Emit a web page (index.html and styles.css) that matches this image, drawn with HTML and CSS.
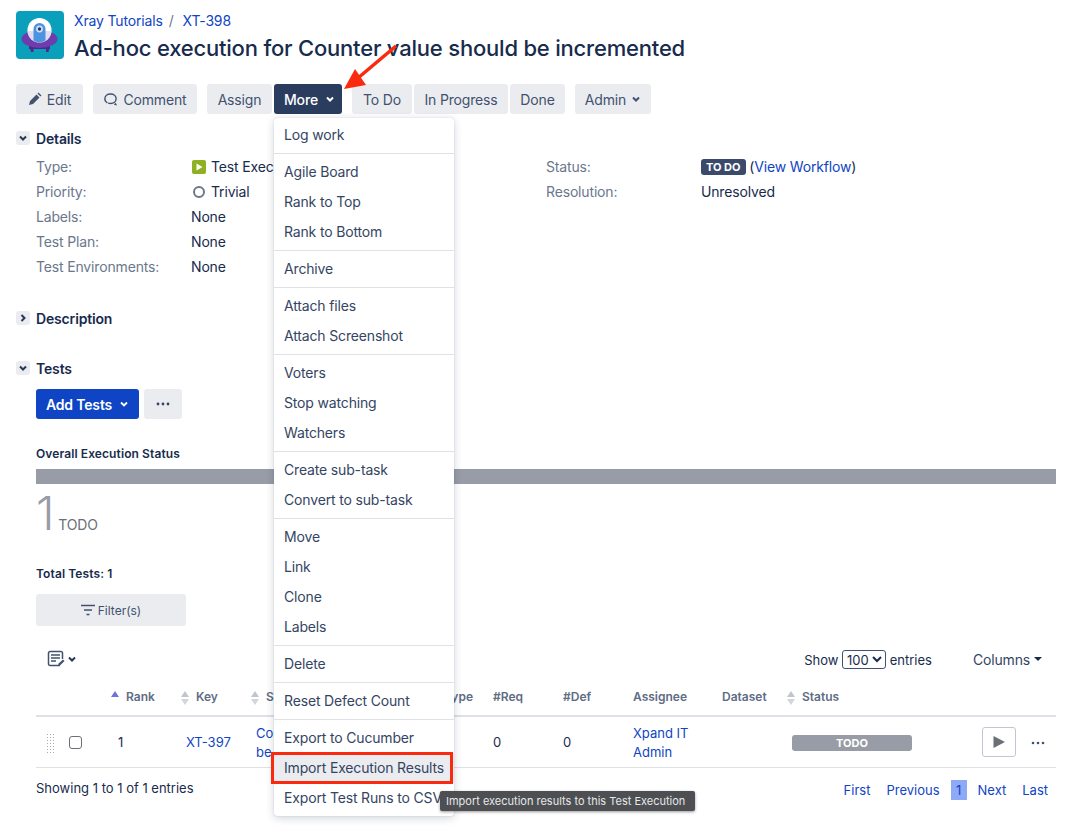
FILE: index.html
```html
<!DOCTYPE html>
<html lang="en">
<head>
<meta charset="utf-8">
<title>XT-398</title>
<link rel="stylesheet" href="styles.css">
</head>
<body>
<div class="page">
  <header class="issue-head">
    <svg class="avatar" viewBox="0 0 48 48" width="48" height="48">
      <rect width="48" height="48" rx="4" fill="#0a9fbb"/>
      <path d="M14 36h3.500v5H15zM30 36h3.500L32.500 41H30z" fill="#4a2a8c"/>
      <rect x="13" y="35" width="21" height="3" fill="#4a2a8c"/>
      <ellipse cx="23.500" cy="28" rx="18" ry="9" fill="#6d3cad"/>
      <circle cx="23.500" cy="19" r="12" fill="#fff"/>
      <path d="M11.500 20a12 11.500 0 0 0 24 0z" fill="#e3dcf5"/>
      <path d="M17.500 29V18a6 6 0 0 1 12 0v11a6 2 0 0 1-12 0z" fill="#4c93e0"/>
      <circle cx="23.500" cy="18" r="3.400" fill="#cfe2f7"/>
      <circle cx="23.500" cy="18" r="1.700" fill="#27306e"/>
    </svg>
    <div class="head-text">
      <nav class="crumbs"><a class="link" href="#">Xray Tutorials</a><span class="sep">/</span><a class="link" href="#">XT-398</a></nav>
      <h1 class="title">Ad-hoc execution for Counter value should be incremented</h1>
    </div>
  </header>

  <div class="toolbar">
    <button class="btn btn-edit"><svg viewBox="0 0 14 14" width="14" height="14"><path d="M1 13l1-4 6.500-6.500 3 3L5 12zM9.500 1.500l1-1 3 3-1 1z" fill="#42526e"/></svg>Edit</button>
    <button class="btn btn-comment"><svg viewBox="0 0 16 16" width="15" height="15"><path d="M8 2.200c3.400 0 6 2 6 5.100 0 2.900-2.600 5-6 5-1 0-1.700-.1-2.500-.4M8 2.200c-3.400 0-6 2-6 5.100 0 2 1.100 3.500 2.700 4.300" fill="none" stroke="#42526e" stroke-width="1.500"/><path d="M15 14.500l-3.500-1 2-2z" fill="#42526e"/></svg>Comment</button>
    <button class="btn btn-assign">Assign</button>
    <button class="btn btn-more">More<svg class="chev" viewBox="0 0 10 10" width="10" height="10"><path d="M2 3.500l3 3 3-3" fill="none" stroke="#fff" stroke-width="2"/></svg></button>
    <button class="btn btn-todo">To Do</button>
    <button class="btn btn-prog">In Progress</button>
    <button class="btn btn-done">Done</button>
    <button class="btn btn-admin">Admin<svg class="chev" viewBox="0 0 10 10" width="10" height="10"><path d="M2 3.500l3 3 3-3" fill="none" stroke="#42526e" stroke-width="2"/></svg></button>
  </div>

  <section class="module details-mod">
    <h2 class="mod-head"><span class="toggler"><svg viewBox="0 0 10 10" width="10" height="10"><path d="M2 3.500l3 3 3-3" fill="none" stroke="#253858" stroke-width="2"/></svg></span>Details</h2>
    <div class="details">
      <dl class="fields">
        <dt>Type:</dt><dd><span class="type-icon"><svg viewBox="0 0 14 14" width="14" height="14"><rect width="14" height="14" rx="2" fill="#8eb021"/><path d="M4.500 3.500l6 3.500-6 3.500z" fill="#fff"/></svg></span>Test Execution</dd>
        <dt>Priority:</dt><dd><span class="type-icon"><svg viewBox="0 0 14 14" width="14" height="14"><circle cx="7" cy="7" r="5" fill="none" stroke="#6b778c" stroke-width="2"/></svg></span>Trivial</dd>
        <dt>Labels:</dt><dd>None</dd>
        <dt>Test Plan:</dt><dd>None</dd>
        <dt>Test Environments:</dt><dd>None</dd>
      </dl>
      <dl class="fields">
        <dt>Status:</dt><dd><span class="lozenge">TO DO</span> (<a class="link" href="#">View Workflow</a>)</dd>
        <dt>Resolution:</dt><dd>Unresolved</dd>
      </dl>
    </div>
  </section>

  <section class="module desc-mod">
    <h2 class="mod-head"><span class="toggler"><svg viewBox="0 0 10 10" width="10" height="10"><path d="M3.500 2l3 3-3 3" fill="none" stroke="#253858" stroke-width="2"/></svg></span>Description</h2>
  </section>

  <section class="module tests-mod">
    <h2 class="mod-head"><span class="toggler"><svg viewBox="0 0 10 10" width="10" height="10"><path d="M2 3.500l3 3 3-3" fill="none" stroke="#253858" stroke-width="2"/></svg></span>Tests</h2>
    <div class="tests-body">
      <div class="tests-actions">
        <button class="btn btn-add">Add Tests<svg class="chev" viewBox="0 0 10 10" width="10" height="10"><path d="M2 3.500l3 3 3-3" fill="none" stroke="#fff" stroke-width="1.800"/></svg></button>
        <button class="btn btn-dots"><svg viewBox="0 0 14 4" width="14" height="4"><circle cx="2" cy="2" r="1.400" fill="#344563"/><circle cx="7" cy="2" r="1.400" fill="#344563"/><circle cx="12" cy="2" r="1.400" fill="#344563"/></svg></button>
      </div>
      <h3 class="small-head overall">Overall Execution Status</h3>
      <div class="progress"></div>
      <div class="count"><span class="count-num">1</span><span class="count-label">TODO</span></div>
      <h3 class="small-head total">Total Tests: 1</h3>
      <button class="btn btn-filter"><svg viewBox="0 0 14 12" width="14" height="12"><path d="M0 1.500h14M3 6h8M5.500 10.500h3" stroke="#42526e" stroke-width="1.400" fill="none"/></svg>Filter(s)</button>
      <div class="table-ctrl">
        <div class="export">
          <svg viewBox="0 0 18 18" width="18" height="18"><path d="M13 15.500H3a1.500 1.500 0 0 1-1.500-1.500V3A1.500 1.500 0 0 1 3 1.500h11A1.500 1.500 0 0 1 15.500 3v6" fill="none" stroke="#42526e" stroke-width="1.500"/><path d="M4 5h9M4 8h9M4 11h5" stroke="#42526e" stroke-width="1.300"/><path d="M11 16l.6-2.500 4.400-4 1.500 1.500-4.300 4.300z" fill="#42526e"/></svg>
          <svg viewBox="0 0 10 10" width="10" height="10"><path d="M2 3.500l3 3 3-3" fill="none" stroke="#253858" stroke-width="2"/></svg>
        </div>
        <div class="len">Show <select class="len-select"><option>100</option></select> entries</div>
        <div class="columns">Columns<span class="caret"></span></div>
      </div>
      <table class="grid">
        <colgroup><col class="c-grip"><col class="c-check"><col class="c-rank"><col class="c-key"><col class="c-sum"><col class="c-type"><col class="c-req"><col class="c-def"><col class="c-asg"><col class="c-data"><col class="c-stat"><col class="c-act"></colgroup>
        <thead>
          <tr>
            <th></th><th></th>
            <th class="sorted"><span class="sort up"></span>Rank</th>
            <th class="sortable"><span class="sort"></span>Key</th>
            <th class="sortable"><span class="sort"></span>Summary</th>
            <th class="type-h">Test Type</th>
            <th>#Req</th><th>#Def</th><th>Assignee</th><th>Dataset</th>
            <th class="sortable"><span class="sort"></span>Status</th>
            <th></th>
          </tr>
        </thead>
        <tbody>
          <tr>
            <td><span class="grip"></span></td>
            <td><span class="check"></span></td>
            <td class="rank">1</td>
            <td><a class="link" href="#">XT-397</a></td>
            <td><a class="link" href="#">Counter value should be incremented</a></td>
            <td></td>
            <td>0</td><td>0</td>
            <td><a class="link" href="#">Xpand IT Admin</a></td>
            <td></td>
            <td><span class="status-pill">TODO</span></td>
            <td class="actions"><button class="play"><svg viewBox="0 0 14 14" width="14" height="14"><path d="M1.500 1l11.500 6-11.500 6z" fill="#6b6f76"/></svg></button><svg viewBox="0 0 14 4" width="14" height="4"><circle cx="2" cy="2" r="1.300" fill="#42526e"/><circle cx="7" cy="2" r="1.300" fill="#42526e"/><circle cx="12" cy="2" r="1.300" fill="#42526e"/></svg></td>
          </tr>
        </tbody>
      </table>
      <div class="table-foot">
        <div class="showing">Showing 1 to 1 of 1 entries</div>
        <div class="pager"><a class="link" href="#">First</a><a class="link" href="#">Previous</a><a class="link current" href="#">1</a><a class="link" href="#">Next</a><a class="link" href="#">Last</a></div>
      </div>
    </div>
  </section>

  <div class="menu">
    <ul class="menu-sec first"><li>Log work</li></ul>
    <ul class="menu-sec"><li>Agile Board</li><li>Rank to Top</li><li>Rank to Bottom</li></ul>
    <ul class="menu-sec"><li>Archive</li></ul>
    <ul class="menu-sec"><li>Attach files</li><li>Attach Screenshot</li></ul>
    <ul class="menu-sec"><li>Voters</li><li>Stop watching</li><li>Watchers</li></ul>
    <ul class="menu-sec"><li>Create sub-task</li><li>Convert to sub-task</li></ul>
    <ul class="menu-sec"><li>Move</li><li>Link</li><li>Clone</li><li>Labels</li></ul>
    <ul class="menu-sec"><li>Delete</li></ul>
    <ul class="menu-sec"><li>Reset Defect Count</li></ul>
    <ul class="menu-sec"><li>Export to Cucumber</li><li class="active">Import Execution Results</li><li>Export Test Runs to CSV</li></ul>
  </div>
  <div class="red-box"></div>
  <div class="tooltip">Import execution results to this Test Execution</div>
  <svg class="arrow" viewBox="0 0 60 52" width="60" height="52"><path d="M54 3L16 35" stroke="#fa2a0f" stroke-width="3.500" fill="none"/><path d="M2 46L13 26 24 42z" fill="#fa2a0f"/></svg>
</div>
</body>
</html>
```
FILE: styles.css
```css
* { box-sizing: border-box; }
html, body { margin: 0; padding: 0; background: #fff; }
body { font-family: Inter, "Liberation Sans", sans-serif; font-size: 14px; letter-spacing: -.16px; color: #172b4d; overflow: hidden; }
.page { position: relative; width: 1075px; height: 828px; padding: 11px 19px 0 16px; overflow: hidden; }
.link { color: #0f45c4; text-decoration: none; }

.issue-head { display: flex; gap: 10px; height: 51px; }
.avatar { flex: none; }
.crumbs { height: 20px; line-height: 20px; }
.sep { color: #6b778c; margin: 0 9px 0 6px; }
.title { margin: 3px 0 0; font-size: 22px; line-height: 28px; font-weight: 500; color: #172b4d; white-space: nowrap; letter-spacing: -.2px; }

.toolbar { display: flex; margin-top: 22px; }
.btn { display: inline-flex; align-items: center; justify-content: center; height: 30px; border: 0; border-radius: 3px; background: #ebecf0; color: #42526e; font: inherit; letter-spacing: inherit; padding: 0; }
.btn-edit { width: 67px; gap: 5px; }
.btn-comment { width: 104px; margin-left: 10px; gap: 5px; }
.btn-assign { width: 65px; margin-left: 10px; }
.btn-more { width: 68px; margin-left: 2px; background: #2b3d5f; color: #fff; font-weight: 500; gap: 7px; justify-content: flex-start; padding-left: 10px; }
.btn-todo { width: 60px; margin-left: 10px; }
.btn-prog { width: 94px; margin-left: 2px; }
.btn-done { width: 55px; margin-left: 2px; }
.btn-admin { width: 76px; margin-left: 10px; gap: 5px; }

.module { display: block; }
.mod-head { display: flex; align-items: center; gap: 6px; height: 20px; margin: 0; font-size: 14px; font-weight: 600; color: #172b4d; }
.toggler { display: flex; align-items: center; justify-content: center; width: 14px; height: 14px; border-radius: 3px; background: #ebecf0; }
.details-mod { margin-top: 14px; }
.desc-mod { margin-top: 29px; }
.tests-mod { margin-top: 30px; }

.details { display: flex; margin: 6px 0 0 20px; }
.fields { display: grid; grid-template-columns: 155px 1fr; grid-auto-rows: 25px; align-items: center; margin: 0; width: 510px; }
.fields dt { color: #6b778c; }
.fields dd { margin: 0; color: #172b4d; white-space: nowrap; }
.type-icon { display: inline-flex; vertical-align: -2px; margin: 0 5px 0 1px; }
.lozenge { display: inline-block; height: 16px; line-height: 16px; padding: 0 5px; border-radius: 3px; background: #3b4a6b; color: #fff; font-size: 11px; font-weight: 700; letter-spacing: 0; vertical-align: 1px; }

.tests-body { margin-left: 20px; }
.tests-actions { display: flex; gap: 5px; margin-top: 11px; }
.btn-add { width: 103px; background: #0f45c4; color: #fff; font-weight: 600; gap: 7px; }
.btn-dots { width: 38px; }
.small-head { margin: 0; font-size: 12px; line-height: 16px; font-weight: 600; letter-spacing: .1px; color: #172b4d; }
.overall { margin-top: 27px; }
.progress { height: 15px; margin-top: 7px; background: #989ca6; }
.count { display: flex; align-items: baseline; gap: 4px; height: 50px; margin-top: 4px; }
.count-num { font-size: 47px; line-height: 50px; font-weight: 300; color: #989ca6; }
.count-label { font-size: 14px; color: #6b6f76; }
.total { margin-top: 28px; }
.btn-filter { width: 150px; height: 32px; margin-top: 12px; font-size: 12px; letter-spacing: 0; gap: 3px; background: #ebecf0; display: flex; }
.table-ctrl { display: flex; align-items: center; height: 30px; margin-top: 18px; }
.export { display: flex; align-items: center; gap: 2px; margin-left: 11px; }
.len { margin-left: auto; font-size: 13px; letter-spacing: 0; color: #172b4d; }
.len-select { font: inherit; width: 44px; height: 19px; padding: 0; color: #172b4d; background: #fff; border: 1px solid #42526e; border-radius: 3px; }
.columns { display: flex; align-items: center; gap: 4px; margin: 0 14px 0 41px; color: #344563; }
.caret { width: 0; height: 0; border: 4px solid transparent; border-top-color: #172b4d; border-bottom: 0; }

.grid { width: 1020px; table-layout: fixed; border-collapse: collapse; margin-top: 2px; letter-spacing: 0; }
.c-grip { width: 25px; } .c-check { width: 47px; } .c-rank { width: 70px; } .c-key { width: 70px; } .c-sum { width: 160px; } .c-type { width: 77px; } .c-req { width: 70px; } .c-def { width: 70px; } .c-asg { width: 89px; } .c-data { width: 70px; } .c-stat { width: 190px; } .c-act { width: 82px; }
.grid th { height: 40px; padding: 2px 8px 0; text-align: left; font-size: 12px; font-weight: 600; color: #5e6c84; border-bottom: 2px solid #dfe1e6; white-space: nowrap; }
.grid td { height: 51px; padding: 2px 8px 0; font-size: 13px; line-height: 19px; color: #172b4d; border-bottom: 1px solid #dfe1e6; }
.grid .type-h { text-align: right; padding-right: 12px; }
.sort { display: inline-block; position: relative; width: 9px; height: 15px; margin: 0 6px 0 -5px; vertical-align: -3px; }
.sort::before, .sort::after { content: ""; position: absolute; left: 0; width: 0; height: 0; border: 4.500px solid transparent; }
.sort::before { top: 2px; border-bottom: 6px solid #c1c5cc; border-top: 0; }
.sort::after { bottom: -1px; border-top: 6px solid #d3d6db; border-bottom: 0; }
.sort.up::before { border-bottom-color: #6f73d9; }
.sort.up::after { display: none; }
.grid .sorted { padding-left: 8px; }
.grip { display: block; width: 9px; height: 20px; margin-left: 2px; background-image: radial-gradient(circle, #a5adba 0.7px, transparent 0.9px); background-size: 3px 3px; }
.check { display: block; width: 13px; height: 13px; border: 1px solid #6b6f76; border-radius: 3px; }
.grid .rank { padding-left: 10px; }
.status-pill { display: block; width: 120px; height: 16px; line-height: 16px; border-radius: 3px; background: #989ca6; color: #fff; font-size: 11px; font-weight: 700; text-align: center; }
.grid .actions { padding: 0; white-space: nowrap; }
.play { display: inline-flex; align-items: center; justify-content: center; width: 34px; height: 30px; margin: 0 15px 0 8px; padding: 0; background: #fff; border: 1px solid #c1c7d0; border-radius: 3px; vertical-align: middle; }

.table-foot { display: flex; justify-content: space-between; margin-top: 10px; font-size: 13px; letter-spacing: 0; }
.showing { height: 20px; line-height: 20px; color: #172b4d; }
.pager { display: flex; height: 20px; line-height: 20px; gap: 16px; margin: 2px 8px 0 0; }
.current { width: 16px; margin: 0 -5px; text-align: center; background: #8ea9f5; }

.menu { position: absolute; left: 274px; top: 118px; width: 180px; height: 698px; padding-top: 2px; background: #fff; border-radius: 3px; box-shadow: 0 2px 8px rgba(9,30,66,.2), 0 0 1px rgba(9,30,66,.25); }
.menu-sec { list-style: none; margin: 0; padding: 3px 0; border-top: 1px solid #dfe1e6; }
.menu-sec.first { border-top: 0; padding-top: 0; }
.menu-sec li { height: 30px; line-height: 30px; padding: 0 10px; color: #344563; white-space: nowrap; }
.menu-sec .active { background: #ebecf0; }
.red-box { position: absolute; left: 271px; top: 752px; width: 182px; height: 32px; border: 3.5px solid #fa2a0f; }
.tooltip { position: absolute; left: 440px; top: 791px; width: 255px; height: 20px; line-height: 20px; padding-left: 6px; background: #4d4f53; color: #e8e8e8; font-size: 11px; letter-spacing: 0; border-radius: 2px; box-shadow: 0 1px 3px rgba(0,0,0,.4); white-space: nowrap; }
.arrow { position: absolute; left: 342px; top: 43px; }
```
